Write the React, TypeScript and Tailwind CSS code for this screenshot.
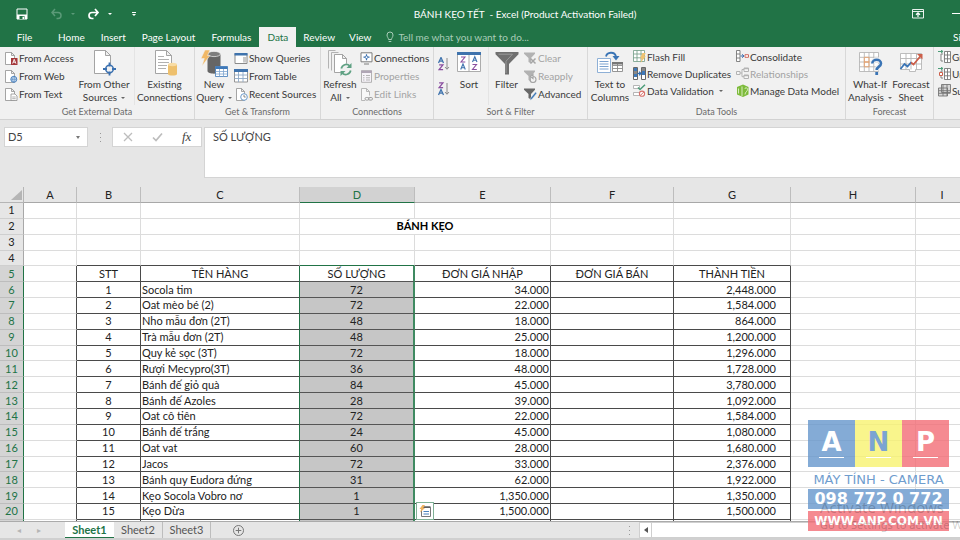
import type { ReactNode } from "react";

/* ---------- icons ---------- */

function Svg({ w, h, children, className = "" }: { w: number; h: number; children: ReactNode; className?: string }) {
  return (
    <svg width={w} height={h} viewBox={`0 0 ${w} ${h}`} fill="none" aria-hidden="true" className={"shrink-0 " + className}>
      {children}
    </svg>
  );
}

const Page = () => <path d="M.5.5h6l3 3v9h-9zM6.500.5v3h3" fill="#fff" stroke="#8f8f8f" strokeWidth=".8" />;

const AccessIcon = () => (
  <Svg w={13} h={13}>
    <Page />
    <path d="M6 6h6.500v7H6z" fill="#a4373a" />
    <path d="M7.600 11.600 9.200 7.300l1.700 4.300M8.200 10.200h2.200" stroke="#fff" strokeWidth=".9" />
  </Svg>
);
const WebIcon = () => (
  <Svg w={13} h={13}>
    <Page />
    <circle cx="8.800" cy="9.300" r="3" fill="#cfe0f2" stroke="#4b82be" />
    <path d="M5.800 9.300h6M8.800 6.300c-1.500 2-1.500 4 0 6 1.500-2 1.500-4 0-6" stroke="#4b82be" strokeWidth=".6" />
  </Svg>
);
const TextIcon = () => (
  <Svg w={13} h={13}>
    <Page />
    <path d="M6 6h4l2 2v4.500H6z" fill="#fff" stroke="#8f8f8f" strokeWidth=".8" />
    <path d="M7.200 9h3.500M7.200 10.700h3.500" stroke="#8f8f8f" strokeWidth=".7" />
  </Svg>
);
const OtherSourcesIcon = () => (
  <Svg w={26} h={26}>
    <path d="M3.500.5h11l5 5v18h-16zM14.500.5v5h5" fill="#fff" stroke="#9a9a9a" strokeWidth=".9" />
    <circle cx="18.500" cy="19" r="3.800" fill="#f1f1f1" stroke="#3a70b0" strokeWidth="1.500" />
    <path d="M18.500 12.500v4M18.500 21.500v4M12 19h4M21 19h4" stroke="#3a70b0" strokeWidth="1.800" />
  </Svg>
);
const ExistingIcon = () => (
  <Svg w={26} h={26}>
    <path d="M3.500.5h11l5 5v18h-16zM14.500.5v5h5" fill="#fff" stroke="#9a9a9a" strokeWidth=".9" />
    <path d="M6 6.500h6M6 9.500h11M6 12.500h11M6 15.500h9M6 18.500h8" stroke="#a8a8a8" strokeWidth=".9" />
    <path d="M16 14.500v9.500c0 2 9 2 9 0v-9.500z" fill="#eec06d" />
    <ellipse cx="20.500" cy="14.500" rx="4.500" ry="1.700" fill="#f8dca4" />
  </Svg>
);
const NewQueryIcon = () => (
  <Svg w={28} h={28}>
    <path d="M7.500 4v17c0 3.500 13 3.500 13 0V4z" fill="#666" />
    <ellipse cx="14" cy="4" rx="6.500" ry="2.600" fill="#7d7d7d" stroke="#f1f1f1" strokeWidth=".7" />
    <path d="M5 0h5L7.500 5.500H10L2 16l2.300-7.500H1z" fill="#f0b866" stroke="#f1f1f1" strokeWidth=".5" />
    <path d="M15.500 16.500h12v10h-12z" fill="#fff" stroke="#3f79b8" strokeWidth=".8" />
    <path d="M15.500 16.500h12v2.500h-12z" fill="#3f79b8" />
    <path d="M19.500 19v7.500M23.500 19v7.500M15.500 21.500h12M15.500 24h12" stroke="#7fa5cf" strokeWidth=".8" />
  </Svg>
);
const ShowQueriesIcon = () => (
  <Svg w={14} h={13}>
    <path d="M1 1.500h12v10H1z" fill="#fff" stroke="#8a8a8a" />
    <path d="M.5 1h13v2.500H.5z" fill="#3f73ad" />
    <path d="M9 5h3v5.500H9z" fill="#c9c9c9" />
  </Svg>
);
const FromTableIcon = () => (
  <Svg w={14} h={14}>
    <path d="M.5.5h13v12.500H.5z" fill="#fff" stroke="#8a8a8a" strokeWidth=".9" />
    <path d="M0 0h14v3H0z" fill="#3f73ad" />
    <path d="M4.500 3v10M9 3v10M.5 6h13M.5 9.500h13" stroke="#8fa9c6" strokeWidth=".9" />
  </Svg>
);
const RecentIcon = () => (
  <Svg w={14} h={13}>
    <path d="M2.500.5h5l3 3v9h-8zM7.500.5v3h3" fill="#fff" stroke="#8f8f8f" strokeWidth=".8" />
    <circle cx="10" cy="9" r="3.300" fill="#fff" stroke="#6b9ac9" />
    <path d="M10 7v2h1.700" stroke="#6b6b6b" strokeWidth=".8" />
  </Svg>
);
const RefreshIcon = () => (
  <Svg w={26} h={26}>
    <path d="M1.500 18.500V.5h7M4.500 20.500v-18h7" stroke="#ababab" strokeWidth=".9" />
    <path d="M7.500 4.500h8l4 4v14h-12zM15.500 4.500v4h4" fill="#fff" stroke="#9a9a9a" strokeWidth=".9" />
    <circle cx="19" cy="19.500" r="6" fill="#f1f1f1" />
    <path d="M14.300 18.500a5 5 0 0 1 8.400-2.600M23.700 20.500a5 5 0 0 1-8.400 2.600" stroke="#5fa183" strokeWidth="1.700" />
    <path d="M24.500 13v5h-5zM13.500 26v-5h5z" fill="#5fa183" />
  </Svg>
);
const ConnectionsIcon = () => (
  <Svg w={13} h={13}>
    <path d="M1 .8h11v9H1zM4 12h5" fill="#fff" stroke="#7d7d7d" />
    <path d="M6.500 2.200v6M3.500 5.200h6" stroke="#3a70b0" strokeWidth="1.200" />
    <circle cx="6.500" cy="5.200" r="1.300" fill="#fff" stroke="#3a70b0" strokeWidth=".8" />
  </Svg>
);
const PropertiesIcon = () => (
  <Svg w={13} h={13}>
    <path d="M1.500.8h10v11.500h-10z" fill="#f6f2f8" stroke="#aaa" strokeWidth=".9" />
    <path d="M1 .5h11V3H1z" fill="#b0a6b5" />
    <path d="M3 5.500h1.500M3 7.800h1.500M3 10h1.500M6 5.500h4M6 7.800h4M6 10h4" stroke="#b5b5b5" />
  </Svg>
);
const EditLinksIcon = () => (
  <Svg w={13} h={13}>
    <path d="M5 12.500H1.500V.5h5l3 3v4M6.500.5v3h3" fill="#f8f8f8" stroke="#b0b0b0" strokeWidth=".9" />
    <rect x="5" y="9.500" width="4" height="2.600" rx="1.300" stroke="#9d9d9d" />
    <rect x="8.500" y="9.500" width="4" height="2.600" rx="1.300" stroke="#9d9d9d" />
  </Svg>
);
function SortIcon({ down = false }: { down?: boolean }) {
  const a = <path d="M0 6 2.500.5 5 6M1 4.200h3" stroke="#3f73ad" strokeWidth="1.300" />;
  const z = <path d="M.6.8h3.800L.6 5.700h4" stroke="#8a4fa0" strokeWidth="1.300" />;
  return (
    <Svg w={12} h={14}>
      <g transform="translate(.5 0)">{down ? z : a}</g>
      <g transform="translate(.5 7)">{down ? a : z}</g>
      <path d="M9 1v11M7 10l2 2.300L11 10" stroke="#808080" strokeWidth=".9" />
    </Svg>
  );
}
const SortBigIcon = () => (
  <Svg w={24} h={26}>
    <path d="M.5 2.500h23v19H.5zM12 5v16.500" fill="#fff" stroke="#a3a3a3" strokeWidth=".9" />
    <path d="M0 2h24v3H0z" fill="#3f73ad" />
    <path d="M4 7h4l-4 5h4.300M15.500 14.500h4l-4 5h4.300" stroke="#8a4fa0" strokeWidth="1.100" />
    <path d="M3.700 19.500 6 14l2.300 5.500M4.600 17.800h2.800M15.500 12l2.300-5.300L20 12M16.400 10.300h2.800" stroke="#3f73ad" strokeWidth="1.100" />
  </Svg>
);
const FilterIcon = () => (
  <Svg w={24} h={26}>
    <path d="M.5 2h23v2.200L14 14v10.500h-4V14L.5 4.200z" fill="#707070" />
    <path d="M3.500 4.200h14l-6.500 7V23" stroke="#989898" />
  </Svg>
);
function SmallFilterIcon({ kind }: { kind: "clear" | "reapply" | "advanced" }) {
  const adv = kind === "advanced";
  return (
    <Svg w={13} h={13}>
      <path d="M0 .5h11v1.200L7 6v5.500L4.500 10V6L0 1.700z" fill={adv ? "#686868" : "#b2b2b2"} />
      {kind === "clear" && <path d="m6.500 6.500 5 5M11.500 6.500l-5 5" stroke="#a5a5a5" strokeWidth="1.500" />}
      {kind === "reapply" && <path d="M6 9.500a3 3 0 1 0 3-3M9 4.500v4l-2.500-2z" stroke="#a5a5a5" strokeWidth="1.100" />}
      {adv && <path d="m6 12.300.8-2.600L11.500 4l1.300 1.200-4.700 5.800z" fill="#3f79b8" stroke="#f1f1f1" strokeWidth=".4" />}
    </Svg>
  );
}
const TextColumnsIcon = () => (
  <Svg w={26} h={26}>
    <path d="M.5 8.500h13v14H.5z" fill="#fff" stroke="#8eb0d6" />
    <path d="M2.500 11.500h9M2.500 14h9M2.500 16.500h9M2.500 19h9" stroke="#7ba2cf" />
    <path d="M15.500 12.500h10v9h-10zM20.500 12.500v9M15.500 15.500h10M15.500 18.500h10" fill="#fff" stroke="#8a8a8a" strokeWidth=".9" />
    <path d="M15 12h11v2.500H15z" fill="#777" />
    <path d="M9 6.500c1-4.500 8.500-5.500 10 0" stroke="#3a74b5" strokeWidth="1.800" />
    <path d="M15.500 6h7L19 10.500z" fill="#3a74b5" />
  </Svg>
);
const FlashFillIcon = () => (
  <Svg w={13} h={13}>
    <path d="M.5.500h11v11H.5zM.5 4h11M.5 7.800h11M4 .5v11M8 .5v11" fill="#fff" stroke="#6f9a84" strokeWidth=".8" />
    <path d="M9.500 3h3.200l-1.500 3.200h1.600L7.500 13l1.200-4.500H7z" fill="#f0c471" />
  </Svg>
);
const DuplicatesIcon = () => (
  <Svg w={13} h={13}>
    <path d="M.5.5h4v12h-4zM8.500.5h4v12h-4z" fill="#fff" stroke="#666" />
    <path d="M1 1h3v3H1zM1 7h3v3H1zM9 4h3v4H9z" fill="#3f79b8" />
    <path d="M1 4h3v3H1zM9 1h3v3H9z" fill="#888" />
    <path d="M4.500 6.500h3M6 4.800l2 1.700-2 1.700" stroke="#2e6db3" strokeWidth="1.200" />
  </Svg>
);
const ValidationIcon = () => (
  <Svg w={13} h={13}>
    <path d="M.5 1.500h6v3h-6zM.5 8.500h6v3h-6z" fill="#fff" stroke="#a5a5a5" strokeWidth=".8" />
    <path d="m5 3.500 2 2L12 .7" stroke="#4d9c78" strokeWidth="1.500" />
    <circle cx="9" cy="9.700" r="2.600" fill="#fff" stroke="#d8726c" strokeWidth="1.100" />
    <path d="m7.300 11.500 3.500-3.500" stroke="#d8726c" />
  </Svg>
);
const ConsolidateIcon = () => (
  <Svg w={13} h={13}>
    <path d="M.5.5h3.500v11H.5zM.5 4h3.500M.5 8h3.500" fill="#fff" stroke="#777" strokeWidth=".9" />
    <path d="M4.500 6h3.500M6 4.300 8 6 6 7.700" stroke="#3a70b0" />
    <path d="M9 4.700h3.500v2.600H9z" fill="#fff" stroke="#cf6a60" />
  </Svg>
);
const RelationshipsIcon = () => (
  <Svg w={13} h={13}>
    <path d="M.5 4.500H4v3H.5zM8 1h4.500v3.500H8zM8 8h4.500v3.500H8zM4 6h2M8 2.500H6v7.200h2" fill="#f6f6f6" stroke="#b3b3b3" />
    <path d="M8 1h4.500v1.200H8zM8 8h4.500v1.200H8z" fill="#b3b3b3" />
  </Svg>
);
const DataModelIcon = () => (
  <Svg w={13} h={13}>
    <path d="M1 3 7 .5 12.500 3v7.500L7 13 1 10.500z" fill="#7dbb3b" />
    <path d="M6 2.500v9.500M2.500 4.500v5M9 5c0-2 2.500-1.500 2.500.5S9 8 9 10.500" stroke="#e3f2cf" strokeWidth=".9" />
  </Svg>
);
const WhatIfIcon = () => (
  <Svg w={26} h={26}>
    <path d="M2.500 2.500h19v19h-19zM2.500 7.300h19M2.500 12h19M2.500 16.800h19M7.300 2.500v19M12 2.500v19M16.800 2.500v19" fill="#fff" stroke="#b5b5b5" strokeWidth=".9" />
    <path d="M7.300 7.300H12V12H7.300zM7.300 12H12v4.800H7.300z" stroke="#e9a36d" strokeWidth=".9" />
    <path d="M15.300 13.500c0-5 9-5 9 0 0 3.300-4.500 3-4.500 7" stroke="#f1f1f1" strokeWidth="5" />
    <path d="M15.300 13.500c0-5 8.700-5 8.700 0 0 3.300-4.300 3-4.300 6.500" stroke="#3a74b5" strokeWidth="2.600" />
    <path d="M18.300 22h2.800v3h-2.800z" fill="#3a74b5" />
  </Svg>
);
const ForecastIcon = () => (
  <Svg w={26} h={26}>
    <path d="M2.500 3.500h21v16h-6v2h-6v-2h-9zM2.500 8.500h21M2.500 14h21M8 3.500v16M13 3.500v16M18.500 3.500v16" fill="#fff" stroke="#b5b5b5" strokeWidth=".9" />
    <path d="m2.500 19 4-5 3 2.500 4-4.500" stroke="#3a74b5" strokeWidth="1.800" />
    <path d="m13 12.500 2.500 2L23 5.500" stroke="#cc5f4a" strokeWidth="1.800" />
    <path d="M19 4h5.500v5.500z" fill="#cc5f4a" />
  </Svg>
);
function OutlineIcon({ kind }: { kind: "group" | "ungroup" | "subtotal" }) {
  if (kind === "subtotal")
    return (
      <Svg w={13} h={13}>
        <path d="M3.500.5h9v8h-9zM.5 4h9v8h-9z" fill="#d8d8d8" stroke="#777" strokeWidth=".9" />
        <path d="M.5 6.700h12M.5 9.300h12M5 .5V12M9 .5V12" stroke="#777" strokeWidth=".9" />
      </Svg>
    );
  return (
    <Svg w={13} h={13}>
      <path d="M6.500 1.500h6v11h-6zM6.500 5h6M6.500 8.800h6M9.500 1.500v11M5 4H3v7h2" fill="#fff" stroke="#777" strokeWidth=".9" />
      <path d="M0 1.500h5M3 0l2 1.500L3 3" stroke="#4d9c78" />
      {kind === "ungroup" && <path d="M1.500 5.500h3v3h-3z" fill="#fff" stroke="#cc5f4a" />}
    </Svg>
  );
}

/* ---------- ribbon ---------- */

const Caret = () => <span className="ml-1 inline-block border-x-2 border-t-2 border-x-transparent border-t-[#666] align-middle" />;

function Big({ icon, lines, width, menu = false }: { icon: ReactNode; lines: string[]; width: string; menu?: boolean }) {
  return (
    <button className={"flex shrink-0 flex-col items-center pt-[3px] leading-[13px] " + width}>
      <span className="flex h-[28px] items-start justify-center">{icon}</span>
      {lines.map((l, i) => (
        <span key={l}>
          {l}
          {menu && i === lines.length - 1 && <Caret />}
        </span>
      ))}
    </button>
  );
}

function Small({ icon, label, disabled = false, menu = false, tight = false }: { icon: ReactNode; label: string; disabled?: boolean; menu?: boolean; tight?: boolean }) {
  return (
    <button disabled={disabled} className={"flex items-center gap-px disabled:text-[#a3a3a3] " + (tight ? "h-[17px]" : "h-[18px]")}>
      {icon}
      <span>{label}</span>
      {menu && <Caret />}
    </button>
  );
}

function Group({ title, width, children }: { title: string; width: string; children: ReactNode }) {
  return (
    <section aria-label={title} className={"flex flex-col border-r border-[#d8d8d8] " + width}>
      <div className="flex h-[58px]">{children}</div>
      <div className="text-center text-[9px] leading-[14px] text-[#6a6a6a]">{title}</div>
    </section>
  );
}

function Ribbon() {
  return (
    <div className="flex h-[73px] overflow-hidden border-b border-[#d2d2d2] bg-[#f1f1f1] whitespace-nowrap text-[#3a3a3a]">
      <Group title="Get External Data" width="w-[195px] shrink-0">
        <div className="w-[74px] pt-[2px] pl-[5px]">
          <Small icon={<AccessIcon />} label="From Access" />
          <Small icon={<WebIcon />} label="From Web" />
          <Small icon={<TextIcon />} label="From Text" />
        </div>
        <Big icon={<OtherSourcesIcon />} lines={["From Other", "Sources"]} width="w-[60px]" menu />
        <Big icon={<ExistingIcon />} lines={["Existing", "Connections"]} width="w-[60px] border-l border-[#e4e4e4]" />
      </Group>
      <Group title="Get & Transform" width="w-[126px] shrink-0">
        <Big icon={<NewQueryIcon />} lines={["New", "Query"]} width="w-[38px]" menu />
        <div className="pt-[2px] pl-px">
          <Small icon={<ShowQueriesIcon />} label="Show Queries" />
          <Small icon={<FromTableIcon />} label="From Table" />
          <Small icon={<RecentIcon />} label="Recent Sources" />
        </div>
      </Group>
      <Group title="Connections" width="w-[113px] shrink-0">
        <Big icon={<RefreshIcon />} lines={["Refresh", "All"]} width="w-[38px]" menu />
        <div className="pt-[2px] pl-px">
          <Small icon={<ConnectionsIcon />} label="Connections" />
          <Small icon={<PropertiesIcon />} label="Properties" disabled />
          <Small icon={<EditLinksIcon />} label="Edit Links" disabled />
        </div>
      </Group>
      <Group title="Sort & Filter" width="w-[154px] shrink-0">
        <div className="flex w-[20px] flex-col items-center gap-[11px] pt-[10px]">
          <button aria-label="Sort A to Z"><SortIcon /></button>
          <button aria-label="Sort Z to A"><SortIcon down /></button>
        </div>
        <Big icon={<SortBigIcon />} lines={["Sort"]} width="w-[30px]" />
        <Big icon={<FilterIcon />} lines={["Filter"]} width="ml-1 w-[36px] border-l border-[#e4e4e4]" />
        <div className="pt-[2px]">
          <Small icon={<SmallFilterIcon kind="clear" />} label="Clear" disabled />
          <Small icon={<SmallFilterIcon kind="reapply" />} label="Reapply" disabled />
          <Small icon={<SmallFilterIcon kind="advanced" />} label="Advanced" />
        </div>
      </Group>
      <Group title="Data Tools" width="w-[258px] shrink-0">
        <Big icon={<TextColumnsIcon />} lines={["Text to", "Columns"]} width="w-[44px]" />
        <div className="w-[103px] pt-px pl-px">
          <Small tight icon={<FlashFillIcon />} label="Flash Fill" />
          <Small tight icon={<DuplicatesIcon />} label="Remove Duplicates" />
          <Small tight icon={<ValidationIcon />} label="Data Validation" menu />
        </div>
        <div className="pt-px pl-px">
          <Small tight icon={<ConsolidateIcon />} label="Consolidate" />
          <Small tight icon={<RelationshipsIcon />} label="Relationships" disabled />
          <Small tight icon={<DataModelIcon />} label="Manage Data Model" />
        </div>
      </Group>
      <Group title="Forecast" width="w-[88px] shrink-0">
        <Big icon={<WhatIfIcon />} lines={["What-If", "Analysis"]} width="w-[48px]" menu />
        <Big icon={<ForecastIcon />} lines={["Forecast", "Sheet"]} width="w-[34px]" />
      </Group>
      <div className="flex-1 overflow-hidden pt-px pl-1">
        <Small tight icon={<OutlineIcon kind="group" />} label="Group" />
        <Small tight icon={<OutlineIcon kind="ungroup" />} label="Ungroup" />
        <Small tight icon={<OutlineIcon kind="subtotal" />} label="Subtotal" />
      </div>
    </div>
  );
}

/* ---------- window top ---------- */

function TitleBar() {
  return (
    <header className="grid h-[27px] grid-cols-[1fr_auto_1fr] items-center text-white">
      <div className="flex items-center pl-4">
        <button aria-label="Save">
          <Svg w={12} h={12}>
            <path d="M1 1h10v10H1z" stroke="#fff" />
            <path d="M1 6.500h10V11H1z" fill="#fff" />
            <path d="M3.500 8h5v3h-5z" fill="#217346" />
            <path d="M6.500 8.700H8V11H6.500z" fill="#fff" />
          </Svg>
        </button>
        <button aria-label="Undo" disabled className="ml-[22px] flex items-center gap-2 text-[#5b9a78]">
          <Svg w={13} h={12}>
            <path d="M5 1 2 4.500 5 8M2 4.500h6c4 0 4 6 0 6H6.500" stroke="currentColor" strokeWidth="1.500" />
          </Svg>
          <span className="border-x-2 border-t-2 border-x-transparent border-t-[#5b9a78]" />
        </button>
        <button aria-label="Redo" className="ml-3 flex items-center gap-2">
          <Svg w={13} h={12}>
            <path d="m8 1 3 3.500L8 8M11 4.500H5c-4 0-4 6 0 6h1.500" stroke="#fff" strokeWidth="1.700" />
          </Svg>
          <span className="border-x-2 border-t-2 border-x-transparent border-t-white" />
        </button>
        <button aria-label="Customize Quick Access Toolbar" className="ml-5 flex flex-col gap-px">
          <span className="h-px w-1 bg-white" />
          <span className="border-x-2 border-t-2 border-x-transparent border-t-white" />
        </button>
      </div>
      <h1 className="pl-[90px] whitespace-pre">{"BÁNH KẸO TẾT  - Excel (Product Activation Failed)"}</h1>
      <div className="flex items-center justify-end gap-7">
        <button aria-label="Ribbon Display Options">
          <Svg w={12} h={10}>
            <path d="M.5.5h11v8.500H.5zM.5 2.500h11" stroke="#fff" strokeWidth=".9" />
            <path d="M6 8V4M4 5.700 6 3.800l2 1.900" stroke="#fff" strokeWidth="1.200" />
          </Svg>
        </button>
        <button aria-label="Minimize" className="h-px w-2 bg-white" />
      </div>
    </header>
  );
}

function Tabs() {
  return (
    <nav className="flex h-5 items-stretch text-white">
      <button className="mr-[9px] w-[41px] pl-2">File</button>
      {["Home", "Insert", "Page Layout", "Formulas"].map((t) => (
        <button key={t} className="px-2">{t}</button>
      ))}
      <button className="bg-[#f1f1f1] px-2 text-[#217346]">Data</button>
      {["Review", "View"].map((t) => (
        <button key={t} className="px-[7px]">{t}</button>
      ))}
      <label className="ml-2 flex flex-1 items-center gap-1 text-[#a9cdb9]">
        <Svg w={8} h={12}>
          <path d="M2.500 8.500C2.500 7 1 6 1 4a3 3 0 0 1 6 0c0 2-1.500 3-1.500 4.500zM2.700 10.500h2.600" stroke="currentColor" />
        </Svg>
        <input aria-label="Tell me" placeholder="Tell me what you want to do..." className="w-[160px] bg-transparent outline-none placeholder:text-[#a9cdb9]" />
      </label>
      <button className="w-[7px] overflow-hidden text-left whitespace-nowrap">Sign in</button>
    </nav>
  );
}

function FormulaBar() {
  return (
    <div className="flex items-start pt-[7px] pb-[9px] pl-1 text-[#444]">
      <div className="flex h-5 w-[84px] items-center border border-[#d4d4d4] bg-white px-[3px]">
        <input aria-label="Name Box" defaultValue="D5" className="w-full min-w-0 text-[11px] outline-none" />
        <button aria-label="Named cells" className="mr-1 border-x-2 border-t-[3px] border-x-transparent border-t-[#777]" />
      </div>
      <div className="flex h-5 w-6 flex-col items-center justify-center gap-[3px]">
        <i className="size-px bg-[#999]" />
        <i className="size-px bg-[#999]" />
        <i className="size-px bg-[#999]" />
      </div>
      <div className="flex h-5 w-[90px] items-center justify-around border border-[#d4d4d4] bg-white">
        <button aria-label="Cancel">
          <Svg w={10} h={10}><path d="m1 1 8 8M9 1 1 9" stroke="#bdbdbd" strokeWidth="1.300" /></Svg>
        </button>
        <button aria-label="Enter">
          <Svg w={11} h={10}><path d="m1 5.500 3 3L10 1.500" stroke="#bdbdbd" strokeWidth="1.700" /></Svg>
        </button>
        <button aria-label="Insert Function" className="font-['Liberation_Serif',serif] text-[13px] leading-4 italic">fx</button>
      </div>
      <textarea
        aria-label="Formula"
        defaultValue="SỐ LƯỢNG"
        className="ml-[2px] block h-[51px] flex-1 resize-none border border-r-0 border-[#d4d4d4] bg-white px-2 py-[2px] text-[11px] leading-[14px] outline-none"
      />
    </div>
  );
}

/* ---------- sheet ---------- */

const ITEMS: [string, string, string, string][] = [
  ["Socola tim", "72", "34.000", "2,448.000"],
  ["Oat mèo bé (2)", "72", "22.000", "1,584.000"],
  ["Nho mẫu đơn (2T)", "48", "18.000", "864.000"],
  ["Trà mẫu đơn (2T)", "48", "25.000", "1,200.000"],
  ["Quy kẻ sọc (3T)", "72", "18.000", "1,296.000"],
  ["Rượi Mecypro(3T)", "36", "48.000", "1,728.000"],
  ["Bánh đế giỏ quà", "84", "45.000", "3,780.000"],
  ["Bánh đế Azoles", "28", "39.000", "1,092.000"],
  ["Oat cô tiên", "72", "22.000", "1,584.000"],
  ["Bánh đế trắng", "24", "45.000", "1,080.000"],
  ["Oat vat", "60", "28.000", "1,680.000"],
  ["Jacos", "72", "33.000", "2,376.000"],
  ["Bánh quy Eudora đứng", "31", "62.000", "1,922.000"],
  ["Kẹo Socola Vobro nơ", "1", "1,350.000", "1,350.000"],
  ["Kẹo Dừa", "1", "1,500.000", "1,500.000"],
];

const LIGHT = "border-r border-b border-[#dcdcdc] ";
const DARK = "border-r border-b border-[#4a4a4a] ";
const HEAD = "border-r border-b font-normal ";
const SELECTED = "border-r-2 border-b border-r-[#3f8a61] border-b-[#555] text-center ";

function RowHead({ n, on = false }: { n?: number; on?: boolean }) {
  return (
    <th scope="row" className={HEAD + (on ? "border-r-[#217346] border-b-[#bdbdbd] bg-[#d4d4d4] text-[#217346]" : "border-r-[#a8a8a8] border-b-[#cfcfcf] bg-[#e6e6e6]")}>
      {n ?? "\u00a0"}
    </th>
  );
}

function Sheet() {
  return (
    <table className="h-[349px] w-[969px] table-fixed border-separate border-spacing-0 text-[11px] leading-[14px] text-[#222]">
      <colgroup>
        <col className="w-[24px]" />
        <col className="w-[53px]" />
        <col className="w-[64px]" />
        <col className="w-[159px]" />
        <col className="w-[115px]" />
        <col className="w-[136px]" />
        <col className="w-[123px]" />
        <col className="w-[117px]" />
        <col className="w-[125px]" />
        <col className="w-[53px]" />
      </colgroup>
      <thead>
        <tr className="h-4">
          <th aria-label="Select all" className={HEAD + "border-[#b5b5b5] bg-[#e6e6e6]"}>
            <Svg w={12} h={12} className="ml-auto"><path d="M11 1v10H0z" fill="#b5b5b5" /></Svg>
          </th>
          {["A", "B", "C", "D", "E", "F", "G", "H", "I"].map((c) => (
            <th key={c} scope="col" className={HEAD + (c === "D" ? "border-r-[#bdbdbd] border-b-[#217346] bg-[#d2d2d2] text-[#217346]" : "border-r-[#bdbdbd] border-b-[#a8a8a8] bg-[#e6e6e6]")}>
              {c}
            </th>
          ))}
        </tr>
      </thead>
      <tbody>
        {[1, 2, 3, 4].map((n) => {
          const line = n === 4 ? "border-r border-b border-r-[#dcdcdc] border-b-[#4a4a4a]" : LIGHT;
          return (
            <tr key={n}>
              <RowHead n={n} />
              <td className={LIGHT} />
              <td className={line} />
              <td className={line} />
              {n === 2 ? (
                <td colSpan={2} className={LIGHT + "text-center font-bold text-black"}>BÁNH KẸO</td>
              ) : (
                <>
                  <td className={n === 4 ? "border-r border-b border-r-[#dcdcdc] border-b-[#217346]" : line} />
                  <td className={line} />
                </>
              )}
              <td className={line} />
              <td className={line} />
              <td className={LIGHT} />
              <td className={LIGHT} />
            </tr>
          );
        })}
        <tr className="text-center">
          <RowHead n={5} on />
          <td className="border-r border-b border-r-[#4a4a4a] border-b-[#dcdcdc]" />
          <td className={DARK}>STT</td>
          <td className={DARK + "border-r-[#217346]"}>TÊN HÀNG</td>
          <td className={SELECTED}>SỐ LƯỢNG</td>
          <td className={DARK}>ĐƠN GIÁ NHẬP</td>
          <td className={DARK}>ĐƠN GIÁ BÁN</td>
          <td className={DARK}>THÀNH TIỀN</td>
          <td className={LIGHT} />
          <td className={LIGHT} />
        </tr>
        {ITEMS.map(([name, qty, cost, total], i) => (
          <tr key={name}>
            <RowHead n={i + 6} on />
            <td className="border-r border-b border-r-[#4a4a4a] border-b-[#dcdcdc]" />
            <td className={DARK + "text-center"}>{i + 1}</td>
            <td className={DARK + "border-r-[#217346] pl-px whitespace-nowrap"}>{name}</td>
            <td className={SELECTED + "bg-[#c6c6c6]"}>{qty}</td>
            <td className={DARK + "relative pr-px text-right"}>
              {cost}
              {i === ITEMS.length - 1 && (
                <button aria-label="Quick Analysis" className="absolute -top-[2px] left-px flex size-[18px] items-center justify-center border border-[#7fb095] bg-white">
                  <Svg w={12} h={12}>
                    <path d="M2.500 2.500h9v9h-9z" fill="#fff" stroke="#777" />
                    <path d="M4.500 2h7" stroke="#555" strokeWidth="1.400" />
                    <path d="M4.500 6.500H10M4.500 9h5.500" stroke="#4b82be" strokeWidth="1.200" />
                    <path d="M3.500 0 .5 4h1.700L1 7.500 6 3H4.200L6 0z" fill="#eeb25e" />
                  </Svg>
                </button>
              )}
            </td>
            <td className={DARK} />
            <td className={DARK + "pr-[14px] text-right"}>{total}</td>
            <td className={LIGHT} />
            <td className={LIGHT} />
          </tr>
        ))}
        <tr>
          <RowHead on />
          <td className="border-r border-[#4a4a4a]" />
          <td className={DARK} />
          <td className={DARK + "border-r-[#217346]"} />
          <td className={SELECTED + "bg-[#c6c6c6]"} />
          <td className={DARK} />
          <td className={DARK} />
          <td className={DARK} />
          <td className={LIGHT} />
          <td className={LIGHT} />
        </tr>
      </tbody>
    </table>
  );
}

function SheetTabs() {
  return (
    <footer className="flex h-[19px] shrink-0 items-stretch border-t border-b-2 border-t-[#ababab] border-b-[#d0d0d0] bg-[#e6e6e6] text-[11px] text-[#555]">
      <div className="flex w-[65px] items-center gap-4 pl-[17px] text-[8px] text-[#b5b5b5]">
        <button aria-label="Previous sheet">◂</button>
        <button aria-label="Next sheet">▸</button>
      </div>
      <button className="w-[49px] border-b border-[#217346] bg-white font-bold text-[#217346]">Sheet1</button>
      <button className="w-[49px] border-r border-[#bdbdbd]">Sheet2</button>
      <button className="w-[48px] border-r border-[#bdbdbd]">Sheet3</button>
      <button aria-label="New sheet" className="ml-[21px]">
        <Svg w={13} h={13}>
          <circle cx="6.500" cy="6.500" r="5" stroke="#777" />
          <path d="M6.500 3.700v5.600M3.700 6.500h5.600" stroke="#777" />
        </Svg>
      </button>
      <div className="ml-auto flex w-[331px] items-stretch">
        <div className="flex w-[10px] flex-col justify-center gap-[3px]">
          <i className="size-px bg-[#999]" />
          <i className="size-px bg-[#999]" />
          <i className="size-px bg-[#999]" />
        </div>
        <button aria-label="Scroll left" className="flex w-[13px] items-center justify-center border border-[#cfcfcf] bg-white">
          <span className="border-y-[3px] border-r-4 border-y-transparent border-r-[#555]" />
        </button>
        <div className="flex-1 border border-r-0 border-l-0 border-[#cfcfcf] bg-white" />
      </div>
    </footer>
  );
}

/* ---------- overlay ---------- */

function Watermark() {
  const bar = "flex items-center justify-center font-bold ";
  return (
    <div className="pointer-events-none absolute right-[11px] bottom-[9px] w-[141px] font-['DejaVu_Sans',sans-serif] whitespace-nowrap">
      <div className="grid h-[47px] grid-cols-3 text-[26px] leading-7 font-bold text-white">
        <div className="flex flex-col items-center bg-[#6596cc]/80 pt-2">A<i className="mt-px h-px w-[25px] bg-white" /></div>
        <div className="flex flex-col items-center bg-[#f8f36f]/80 pt-2 text-[#7ba4d2]">N<i className="mt-px h-px w-[25px] bg-white" /></div>
        <div className="flex flex-col items-center bg-[#f26d75]/80 pt-2">P<i className="mt-px h-px w-[25px] bg-white" /></div>
      </div>
      <div className="flex h-[22px] items-center justify-center pt-1 text-[13px] text-[#6f9dce]">MÁY TÍNH - CAMERA</div>
      <div className={bar + "h-5 bg-[#6596cc]/80 text-[16px] text-white"}>098 772 0 772</div>
      <div className={bar + "mt-[2px] h-5 bg-[#f26d75]/80 text-[12px] text-white"}>WWW.ANP.COM.VN</div>
    </div>
  );
}

function ActivateNotice() {
  return (
    <div className="pointer-events-none absolute right-0 bottom-[7px] w-[140px] overflow-hidden font-['Noto_Sans',sans-serif] whitespace-nowrap text-black/20">
      <p className="text-[15px] leading-5">Activate Windows</p>
      <p className="text-[11px] leading-4">Go to Settings to activate Windows.</p>
    </div>
  );
}

export default function App() {
  return (
    <div className="relative flex h-screen flex-col overflow-hidden bg-[#e6e6e6] font-['Lato','Noto_Sans',sans-serif] text-[10px] leading-[14px]">
      <div className="shrink-0 bg-[#217346]">
        <TitleBar />
        <Tabs />
      </div>
      <div className="shrink-0">
        <Ribbon />
        <FormulaBar />
      </div>
      <main className="min-h-0 flex-1 overflow-hidden bg-white">
        <Sheet />
      </main>
      <SheetTabs />
      <Watermark />
      <ActivateNotice />
    </div>
  );
}
